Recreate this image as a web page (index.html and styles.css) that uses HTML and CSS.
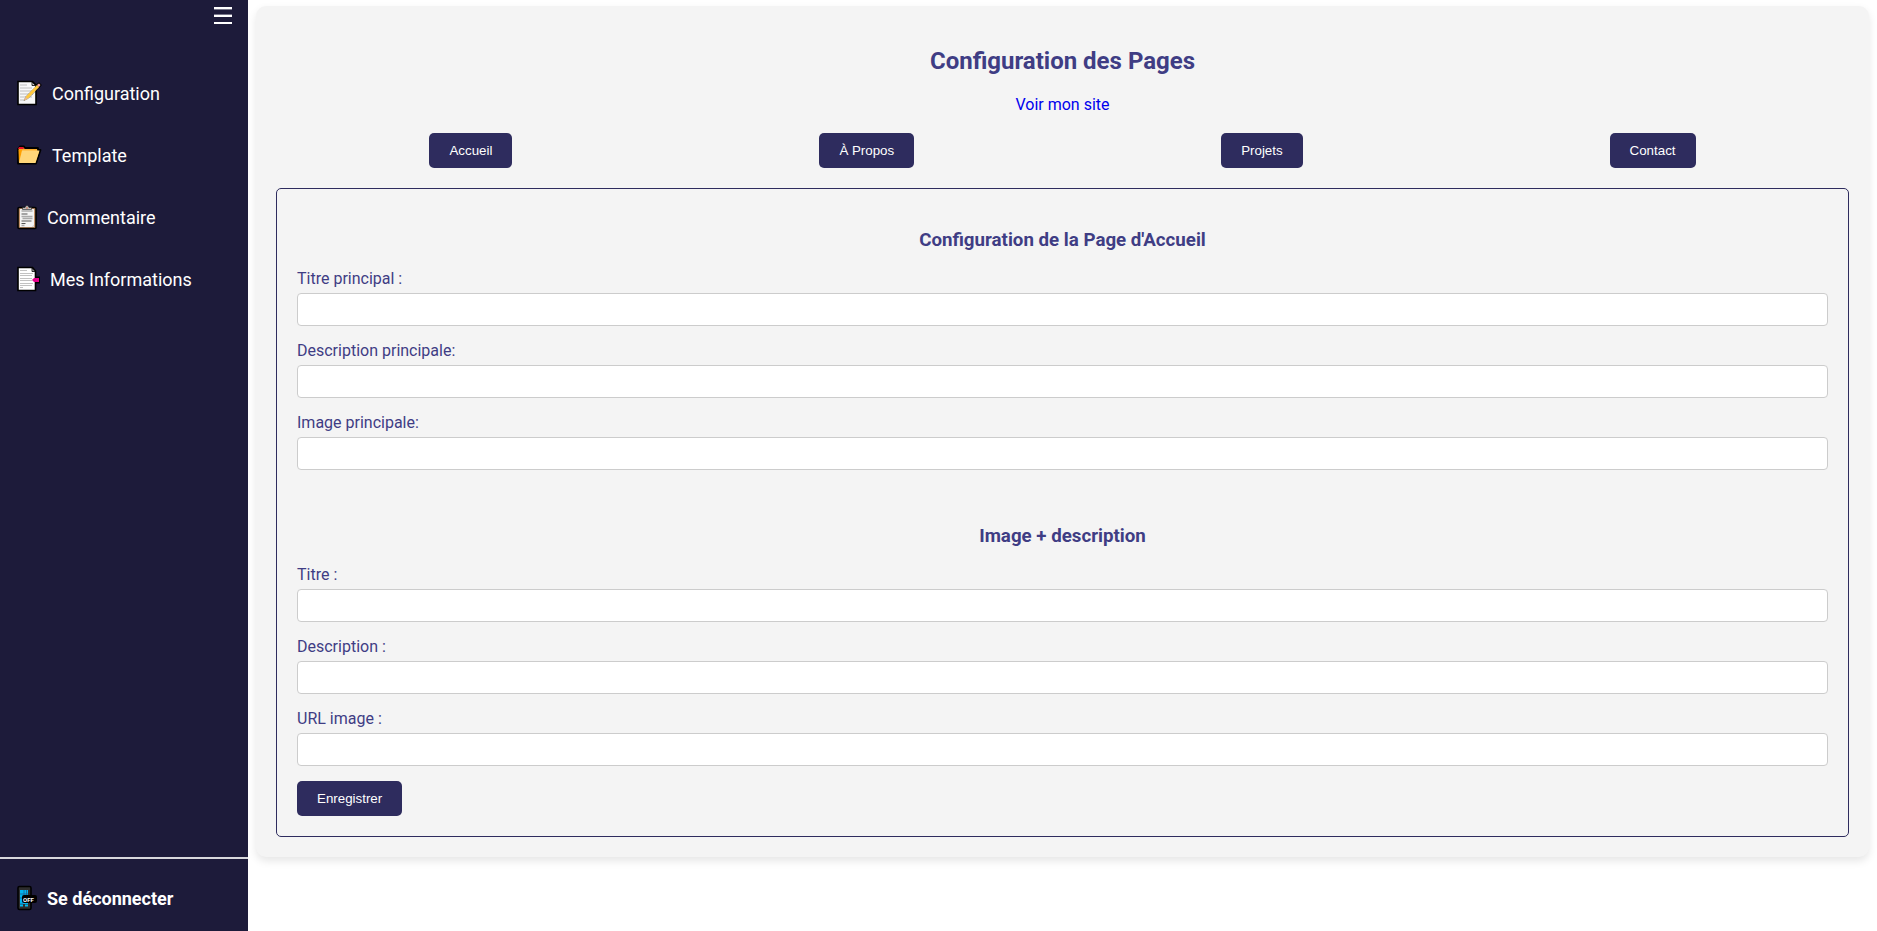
FILE: index.html
```html
<!DOCTYPE html>
<html lang="fr">
<head>
<meta charset="utf-8">
<title>Configuration des Pages</title>
<link rel="stylesheet" href="styles.css">
</head>
<body>
<div class="layout">
  <aside class="sidebar">
    <button class="menu-toggle" type="button" aria-label="Menu">
      <svg width="18" height="18" viewBox="0 0 18 18" shape-rendering="crispEdges"><path d="M0 0h18v2H0zM0 8h18v2H0zM0 15h18v2H0z" fill="#fff"/><path d="M0 2h18v1H0zM0 7h18v1H0z" fill="#77768a"/></svg>
    </button>
    <nav class="menu">
      <a class="menu-link" href="#">
        <svg class="icon" width="26" height="26" viewBox="0 0 26 26"><path d="M2 1.500h14.500l3.500 3.500v19.500H2z" fill="#f8f8f8" stroke="#000" stroke-width="1.600"/><path d="M16 2v3.500h3.500z" fill="#ccc" stroke="#000" stroke-width=".800"/><path d="M4 5h7M4 8h12M4 11h12M4 14h13M4 17h12M4 20h5" stroke="#bdbdbd" stroke-width="1.200"/><path d="M8 20.500l2-4L21.500 5l2.500 2L12 18.500z" stroke="#000" stroke-width="1" fill="none" stroke-opacity=".350"/><path d="M21 5l2-1.500 1.500 1.500-1.500 2z" stroke="#000" stroke-width="2"/><path d="M8 20.500l2-4L21 5l2.200 2L12 18.500z" fill="#ffc83d"/><path d="M21 5l2-1.500 1.500 1.500-1.500 2z" fill="#f7a5a5"/><path d="M8 20.500l1.600-3.500 2 1.500z" fill="#e8b89a"/></svg>
        <span>Configuration</span>
      </a>
      <a class="menu-link" href="#">
        <svg class="icon" width="26" height="26" viewBox="0 0 26 26"><path d="M2 7l2-2.500h4L9 6h13v2h2.500L20 21.500H2z" fill="#ffb02e" stroke="#000" stroke-width="1.800" stroke-linejoin="round"/><path d="M3 5h4l1 2H2z" fill="#e81224"/><path d="M2.500 7.500h4L3 20z" fill="#ffa000"/><path d="M6 8.500h17.500L19.500 21H3z" fill="#ffd679"/></svg>
        <span>Template</span>
      </a>
      <a class="menu-link" href="#">
        <svg class="icon" width="21" height="26" viewBox="0 0 21 26"><rect x="2" y="3.500" width="18" height="21" rx="1" fill="#c09066" stroke="#000" stroke-width="1.600"/><path d="M4 5h14v15.500l-2 2.500h-12z" fill="#f4f4f4"/><path d="M18 20.500v2.500h-2.500z" fill="#ddd"/><path d="M6.500 5.500V3.500h2.500q.5-2 2-2t2 2h2.500v2z" fill="#bdbdbd" stroke="#222" stroke-width=".600"/><circle cx="11" cy="4" r="1" fill="#d58b76"/><path d="M5.500 10h6M5.500 17h10M5.500 19.500h4" stroke="#555" stroke-width="1"/><path d="M5.500 7h11M5.500 12.500h11M6.500 14.500h10M5.500 21.500h3" stroke="#aaa" stroke-width="1.600"/></svg>
        <span>Commentaire</span>
      </a>
      <a class="menu-link" href="#">
        <svg class="icon" width="24" height="26" viewBox="0 0 24 26"><path d="M2 1.500h14.500l3 3.500v19.500H2z" fill="#fff" stroke="#000" stroke-width="1.600"/><path d="M16 2v3.500h3z" fill="#bbb" stroke="#000" stroke-width=".800"/><path d="M4 4.500h7M4 7.500h13M4 9.500h12M4 12.500h12M4 14.500h12M4 17.500h13M4 19.500h12M4 21.500h3" stroke="#c2c2c2" stroke-width="1"/><path d="M19 10.500h5v7h-5z" fill="#000"/><path d="M16 14l2-2h5v4h-5z" fill="#e3008c"/></svg>
        <span>Mes Informations</span>
      </a>
    </nav>
    <div class="session">
      <a class="menu-link logout" href="#">
        <svg class="icon" width="21" height="26" viewBox="0 0 21 26"><rect x="2" y="1.500" width="13" height="23" rx="1.500" fill="#2d2d2d" stroke="#000" stroke-width="1.600"/><path d="M4 5h8v14H4z" fill="#00b4f0"/><path d="M4 9h8M4 13h4M8 5v5M10.500 5v5M4 19h3" stroke="#1d5f91" stroke-width=".800"/><path d="M4 20.500h3M9 20.500h3" stroke="#00bcf2" stroke-width="1.800"/><rect x="6" y="10" width="15" height="8" rx="2" fill="#000"/><text class="icon-text" x="7" y="16.500">OFF</text></svg>
        <span>Se déconnecter</span>
      </a>
    </div>
  </aside>
  <main class="content">
    <section class="card">
      <h2 class="title">Configuration des Pages</h2>
      <a class="site-link" href="#">Voir mon site</a>
      <div class="tabs">
        <button class="button" type="button">Accueil</button>
        <button class="button" type="button">À Propos</button>
        <button class="button" type="button">Projets</button>
        <button class="button" type="button">Contact</button>
      </div>
      <form class="panel">
        <h3 class="subtitle">Configuration de la Page d'Accueil</h3>
        <label class="label" for="main-title">Titre principal :</label>
        <input class="field" id="main-title" type="text">
        <label class="label" for="main-description">Description principale:</label>
        <input class="field" id="main-description" type="text">
        <label class="label" for="main-image">Image principale:</label>
        <input class="field" id="main-image" type="text">
        <h3 class="subtitle subtitle-next">Image + description</h3>
        <label class="label" for="item-title">Titre :</label>
        <input class="field" id="item-title" type="text">
        <label class="label" for="item-description">Description :</label>
        <input class="field" id="item-description" type="text">
        <label class="label" for="item-image">URL image :</label>
        <input class="field" id="item-image" type="text">
        <button class="button" type="submit">Enregistrer</button>
      </form>
    </section>
  </main>
</div>
</body>
</html>
```
FILE: styles.css
```css
* {
  box-sizing: border-box;
}

body {
  margin: 0;
  background: #fff;
  font-family: Roboto, sans-serif;
  font-size: 16px;
  line-height: 19px;
}

.layout {
  display: flex;
  min-height: 100vh;
}

.sidebar {
  display: flex;
  flex-direction: column;
  flex: 0 0 248px;
  background: #1d1b3a;
}

.menu-toggle {
  align-self: flex-end;
  margin-right: 16px;
  padding: 7px 0 0;
  border: 0;
  background: none;
  cursor: pointer;
}

.menu-toggle svg,
.icon {
  display: block;
}

.menu {
  display: flex;
  flex-direction: column;
  margin-top: 37px;
}

.menu-link {
  display: flex;
  align-items: center;
  gap: 10px;
  height: 62px;
  padding: 0 16px;
  color: #fff;
  font-size: 18px;
  text-decoration: none;
}

.icon-text {
  fill: #fff;
  font-size: 6px;
  font-weight: 700;
}

.session {
  margin-top: auto;
  padding: 8px 0 2px;
  border-top: 2px solid #d8d8dc;
}

.logout {
  font-weight: 700;
}

.content {
  flex: 1;
  min-width: 0;
  padding: 6px 8px;
}

.card {
  padding: 20px;
  border-radius: 10px;
  background: #f4f4f4;
  box-shadow: 0 4px 8px rgba(0, 0, 0, 0.1);
  text-align: center;
}

.title {
  margin: 21px 0 20px;
  color: #3f3d84;
  font-size: 24px;
  line-height: 28px;
}

.site-link {
  color: #00e;
  text-decoration: none;
}

.tabs {
  display: flex;
  justify-content: space-around;
  margin: 19px 0 20px;
}

.button {
  padding: 10px 20px;
  border: 0;
  border-radius: 5px;
  background: #2e2c5e;
  color: #fff;
  font-family: "Liberation Sans", Arial, sans-serif;
  cursor: pointer;
}

.panel {
  padding: 20px;
  border: 1px solid #2e2c5e;
  border-radius: 5px;
  text-align: left;
}

.subtitle {
  margin: 20px 0 18px;
  color: #3f3d84;
  line-height: 22px;
  text-align: center;
}

.subtitle-next {
  margin-top: 55px;
}

.label {
  display: block;
  margin-bottom: 5px;
  color: #3f3d84;
}

.field {
  display: block;
  width: 100%;
  margin-bottom: 15px;
  padding: 8px;
  border: 1px solid #ccc;
  border-radius: 4px;
  background: #fff;
  font-family: "Liberation Sans", Arial, sans-serif;
}
```
